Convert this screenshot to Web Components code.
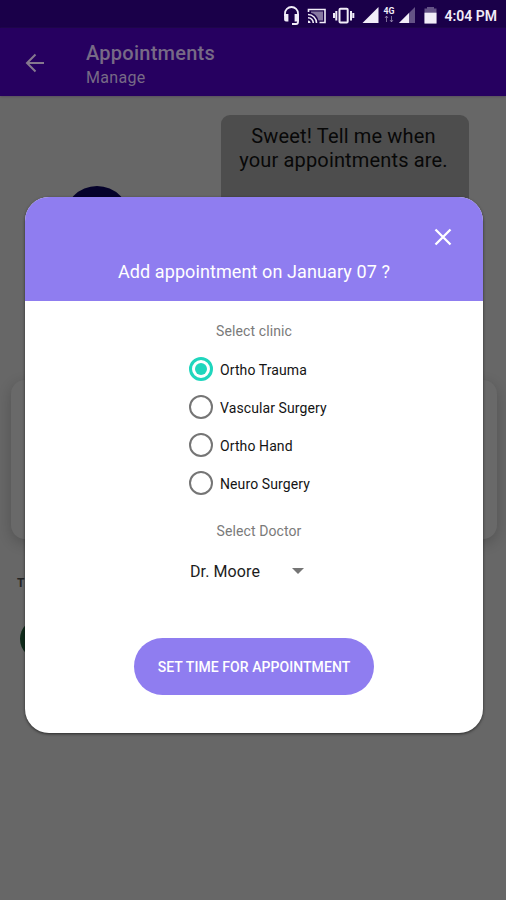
<!DOCTYPE html>
<html lang="en">
<head>
<meta charset="utf-8">
<meta name="viewport" content="width=device-width, initial-scale=1">
<title>Appointments</title>
<style>
  body {
    margin: 0;
    height: 900px;
    overflow: hidden;
    background: #676767;
    font-family: Roboto, sans-serif;
  }
</style>
</head>
<body>
<appointments-app></appointments-app>

<script>
class StatusBar extends HTMLElement {
  constructor() {
    super();
    this.attachShadow({ mode: "open" });
  }

  static get styles() {
    return /* css */`
      :host {
        display: block;
        height: 28px;
        background: #1a0049;
        color: #f1edf8;
      }

      svg {
        display: block;
      }

      text {
        font-family: Roboto, sans-serif;
        fill: currentColor;
      }
    `;
  }

  connectedCallback() {
    this.render();
  }

  render() {
    this.shadowRoot.innerHTML = /* html */`
    <style>${StatusBar.styles}</style>
    <svg width="506" height="28" viewBox="0 0 506 28" fill="none" stroke="currentColor">
      <g stroke-width="1.8">
        <path d="M285 16v-2.500a6.500 6.500 0 0 1 13 0V22a2 2 0 0 1-2 2h-4"/>
        <path d="M285 15h2.500v5.500H286a1 1 0 0 1-1-1zM298 15h-2.500v5.500h2.500z" fill="currentColor"/>
      </g>
      <g stroke-width="1.6">
        <path d="M308.500 12V9.500H325v13h-5.500"/>
        <path d="M308 14.500a8.500 8.500 0 0 1 8.500 8.500M308 17.700a5.300 5.300 0 0 1 5.300 5.300"/>
        <path d="M308 20.500a2.500 2.500 0 0 1 2.500 2.500H308z" fill="currentColor" stroke="none"/>
        <path d="M311 11.500h12v9h-4.500c-1-4-3.500-6.700-7.500-7.700z" fill="currentColor" fill-opacity=".5" stroke="none"/>
      </g>
      <rect x="339.500" y="8.800" width="8.200" height="13.700" rx="1" stroke-width="2"/>
      <path d="M336.300 11v9.500M334 13v5M351 11v9.500M353.300 13v5" stroke-width="2"/>
      <g stroke="none" fill="currentColor">
        <path d="M378.500 7v16h-16z"/>
        <path d="M415 7v16h-16z" opacity=".35"/>
        <path d="M409 13v10h-10z"/>
        <path d="M427 7h7v1.500h2.500v15h-12v-15h2.500z" opacity=".35"/>
        <path d="M424.500 12.700h12v10.800h-12z"/>
      </g>
      <path d="M386.500 22v-5.500M385 18l1.500-2 1.500 2M391.500 16v5.500M390 20l1.500 2 1.500-2" stroke-width="1" opacity=".45"/>
      <g stroke="none">
        <text x="383.500" y="14" font-size="8.500" font-weight="700" textLength="11" lengthAdjust="spacingAndGlyphs">4G</text>
        <text x="444.500" y="20.500" font-size="14" font-weight="600" textLength="52.500" lengthAdjust="spacingAndGlyphs">4:04 PM</text>
      </g>
    </svg>`;
  }
}

class AppToolbar extends HTMLElement {
  constructor() {
    super();
    this.attachShadow({ mode: "open" });
  }

  static get styles() {
    return /* css */`
      :host {
        display: flex;
        align-items: center;
        box-sizing: border-box;
        height: 68px;
        padding: 2px 0 0 25px;
        background: #260060;
        color: #776a86;
        box-shadow: 0 1px 2px #59505f;
      }

      svg {
        margin-right: 41px;
      }

      .text {
        padding-top: 4px;
      }

      .title {
        font-size: 20px;
        line-height: 25px;
        font-weight: 500;
        letter-spacing: 0.25px;
      }

      .subtitle {
        font-size: 16px;
        line-height: 23px;
        letter-spacing: 0.3px;
      }
    `;
  }

  connectedCallback() {
    this.render();
  }

  render() {
    this.shadowRoot.innerHTML = /* html */`
    <style>${AppToolbar.styles}</style>
    <svg width="20" height="20" viewBox="0 0 20 20" fill="none" stroke="#85788e" stroke-width="2">
      <path d="M19 10H2M10.500 1.500 2 10l8.500 8.500"/>
    </svg>
    <div class="text">
      <div class="title"><slot name="title"></slot></div>
      <div class="subtitle"><slot name="subtitle"></slot></div>
    </div>`;
  }
}

class ChatPage extends HTMLElement {
  constructor() {
    super();
    this.attachShadow({ mode: "open" });
  }

  static get styles() {
    return /* css */`
      :host {
        display: block;
        height: 804px;
      }

      .message {
        display: flex;
        justify-content: space-between;
        align-items: flex-start;
        height: 265px;
        padding: 19px 37px 0 64px;
      }

      .avatar {
        width: 66px;
        height: 66px;
        margin-top: 71px;
        border-radius: 50%;
        background: #05022b;
      }

      .bubble {
        box-sizing: border-box;
        width: 248px;
        height: 160px;
        padding: 9px 3px 0 0;
        border-radius: 9px;
        background: #4d4d4d;
        color: #080808;
        font-size: 20px;
        line-height: 24px;
        letter-spacing: 0.15px;
        text-align: center;
      }

      .card {
        height: 159px;
        margin: 0 9px 0 11px;
        border-radius: 14px;
        background: #696969;
        box-shadow: 0 4px 14px rgba(0, 0, 0, .2);
      }

      .label {
        margin: 36px 0 0 17px;
        color: #242424;
        font-size: 12px;
        line-height: 16px;
        font-weight: 700;
      }

      .status {
        width: 40px;
        height: 40px;
        margin: 28px 0 0 20px;
        border-radius: 50%;
        background: #102b1b;
      }
    `;
  }

  connectedCallback() {
    this.render();
  }

  render() {
    this.shadowRoot.innerHTML = /* html */`
    <style>${ChatPage.styles}</style>
    <div class="message">
      <div class="avatar"></div>
      <div class="bubble">Sweet! Tell me when<br>your appointments are.</div>
    </div>
    <div class="card"></div>
    <div class="label">T</div>
    <div class="status"></div>`;
  }
}

class RadioOption extends HTMLElement {
  constructor() {
    super();
    this.attachShadow({ mode: "open" });
  }

  static get styles() {
    return /* css */`
      :host {
        display: flex;
        align-items: center;
        gap: 7px;
        height: 38px;
        color: #141414;
        font-size: 14px;
        letter-spacing: 0.1px;
        cursor: pointer;
      }

      .ring {
        display: flex;
        box-sizing: border-box;
        width: 24px;
        height: 24px;
        border: 2.5px solid #757575;
        border-radius: 50%;
      }

      .text {
        padding-top: 1px;
      }

      :host([checked]) .ring {
        border-width: 3px;
        border-color: #1fd6bd;
      }

      :host([checked]) .ring::after {
        content: "";
        width: 12px;
        height: 12px;
        margin: auto;
        border-radius: 50%;
        background: #1fd6bd;
      }
    `;
  }

  connectedCallback() {
    this.render();
  }

  render() {
    this.shadowRoot.innerHTML = /* html */`
    <style>${RadioOption.styles}</style>
    <span class="ring"></span>
    <span class="text"><slot></slot></span>`;
  }
}

class AppointmentDialog extends HTMLElement {
  constructor() {
    super();
    this.attachShadow({ mode: "open" });
  }

  static get styles() {
    return /* css */`
      :host {
        display: flex;
        flex-direction: column;
        width: 458px;
        height: 536px;
        border-radius: 24px;
        overflow: hidden;
        background: #fff;
        box-shadow: 0 1px 3px rgba(0, 0, 0, .6);
      }

      header {
        display: flex;
        flex-direction: column;
        box-sizing: border-box;
        height: 104px;
        padding-top: 31px;
        background: #8f7df0;
        color: #fff;
      }

      .close {
        align-self: flex-end;
        margin-right: 31px;
      }

      h1 {
        margin: 14px 0 0;
        font-size: 18px;
        line-height: 24px;
        font-weight: 400;
        letter-spacing: 0.1px;
        text-align: center;
      }

      .label {
        color: #7a7a7a;
        font-size: 14px;
        line-height: 20px;
        letter-spacing: 0.1px;
        text-align: center;
      }

      .clinic {
        margin-top: 20px;
      }

      .options {
        margin: 9px 0 0 164px;
      }

      .doctor {
        margin: 19px 0 0 10px;
      }

      .select {
        display: flex;
        align-items: center;
        justify-content: space-between;
        width: 114px;
        height: 24px;
        margin: 18px 0 0 165px;
        color: #1c1c1c;
        font-size: 16px;
        letter-spacing: 0.1px;
      }

      button {
        align-self: center;
        width: 240px;
        height: 57px;
        margin: 55px 0 0 0;
        padding: 0;
        border: none;
        border-radius: 29px;
        background: #8f7df0;
        color: #fff;
        font-family: inherit;
        font-size: 14px;
        font-weight: 500;
        letter-spacing: 0.06px;
        cursor: pointer;
      }
    `;
  }

  connectedCallback() {
    this.render();
    this.options = this.shadowRoot.querySelector(".options");
    this.init();
  }

  init() {
    this.options.addEventListener("click", (e) => {
      const option = e.target.closest("radio-option");
      if (!option) return;
      this.options.querySelectorAll("radio-option").forEach((item) => {
        item.toggleAttribute("checked", item === option);
      });
    });
  }

  render() {
    this.shadowRoot.innerHTML = /* html */`
    <style>${AppointmentDialog.styles}</style>
    <header>
      <svg class="close" width="18" height="18" viewBox="0 0 18 18" stroke="#fff" stroke-width="2.3">
        <path d="m1.500 1.500 15 15M16.500 1.500l-15 15"/>
      </svg>
      <h1><slot></slot></h1>
    </header>
    <div class="label clinic">Select clinic</div>
    <div class="options">
      <radio-option checked>Ortho Trauma</radio-option>
      <radio-option>Vascular Surgery</radio-option>
      <radio-option>Ortho Hand</radio-option>
      <radio-option>Neuro Surgery</radio-option>
    </div>
    <div class="label doctor">Select Doctor</div>
    <div class="select">
      <span>Dr. Moore</span>
      <svg width="12" height="6" viewBox="0 0 12 6" fill="#757575"><path d="M0 0h12L6 6z"/></svg>
    </div>
    <button>SET TIME FOR APPOINTMENT</button>`;
  }
}

class AppointmentsApp extends HTMLElement {
  constructor() {
    super();
    this.attachShadow({ mode: "open" });
  }

  static get styles() {
    return /* css */`
      :host {
        display: block;
        position: relative;
        width: 506px;
        height: 900px;
        overflow: hidden;
      }

      appointment-dialog {
        position: absolute;
        top: 197px;
        left: 25px;
      }
    `;
  }

  connectedCallback() {
    this.render();
  }

  render() {
    this.shadowRoot.innerHTML = /* html */`
    <style>${AppointmentsApp.styles}</style>
    <status-bar></status-bar>
    <app-toolbar>
      <span slot="title">Appointments</span>
      <span slot="subtitle">Manage</span>
    </app-toolbar>
    <chat-page></chat-page>
    <appointment-dialog>Add appointment on January 07 ?</appointment-dialog>`;
  }
}

customElements.define("status-bar", StatusBar);
customElements.define("app-toolbar", AppToolbar);
customElements.define("chat-page", ChatPage);
customElements.define("radio-option", RadioOption);
customElements.define("appointment-dialog", AppointmentDialog);
customElements.define("appointments-app", AppointmentsApp);
</script>
</body>
</html>
